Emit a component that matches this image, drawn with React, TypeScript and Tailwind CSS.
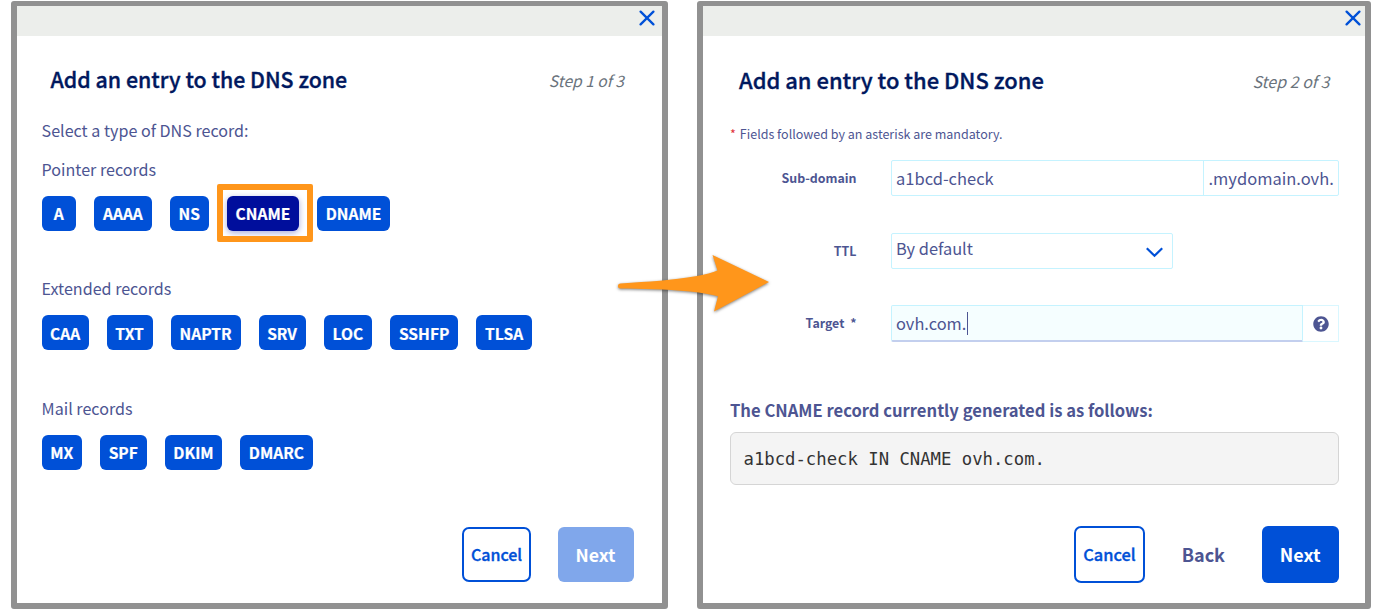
import React from "react";

type RecordType = { label: string; width: string; selected?: boolean };

const groups: { title: string; records: RecordType[] }[] = [
  {
    title: "Pointer records",
    records: [
      { label: "A", width: "w-[34.5px]" },
      { label: "AAAA", width: "w-[57.7px]" },
      { label: "NS", width: "w-[39px]" },
      { label: "CNAME", width: "w-[72.3px]", selected: true },
      { label: "DNAME", width: "w-[73px]" },
    ],
  },
  {
    title: "Extended records",
    records: [
      { label: "CAA", width: "w-[47px]" },
      { label: "TXT", width: "w-[46px]" },
      { label: "NAPTR", width: "w-[70px]" },
      { label: "SRV", width: "w-[47px]" },
      { label: "LOC", width: "w-[48.5px]" },
      { label: "SSHFP", width: "w-[68.2px]" },
      { label: "TLSA", width: "w-[55.7px]" },
    ],
  },
  {
    title: "Mail records",
    records: [
      { label: "MX", width: "w-[40.2px]" },
      { label: "SPF", width: "w-[47px]" },
      { label: "DKIM", width: "w-[57.4px]" },
      { label: "DMARC", width: "w-[72.5px]" },
    ],
  },
];

function CloseIcon({ className }: { className: string }) {
  return (
    <svg className={className} width="16" height="16" viewBox="0 0 16 16" fill="none" stroke="#0050d7" strokeWidth="2.3" strokeLinecap="round">
      <path d="M1.6 1.6 14.4 14.4M14.4 1.6 1.6 14.4" />
    </svg>
  );
}

function RecordButton({ label, width, selected }: RecordType) {
  const tone = selected ? "bg-[#000e9c] shadow-[0_2px_6px_rgba(0,14,156,0.35)]" : "bg-[#0050d7]";
  return (
    <div className="relative">
      <button className={`flex h-[35px] items-center justify-center rounded-[6px] text-[15.6px] leading-[22px] font-bold text-white [-webkit-text-stroke:0.2px_white] ${width} ${tone}`}>
        {label}
      </button>
      {selected && <span className="absolute -top-3 -left-[10px] h-[58px] w-24 rounded-[2px] border-[6px] border-[#ff961b]" />}
    </div>
  );
}

function SelectStep() {
  return (
    <section className="ml-[11px] mt-px h-[608px] w-[657px] shrink-0 rounded-[3px] border-[6px] border-t-[5px] border-[#919191] bg-white">
      <div className="flex h-[30px] justify-end bg-[#eceeeb]">
        <CloseIcon className="mt-[4px] mr-[7px]" />
      </div>
      <div className="pr-[25px] pl-[24.6px]">
        <header className="flex items-center justify-between pt-[28px] pl-[9px] pr-[13px]">
          <h1 className="text-[21.35px] leading-[30px] font-medium text-[#00185e] [-webkit-text-stroke:0.35px_#00185e]">Add an entry to the DNS zone</h1>
          <span className="pt-[2px] text-[15.6px] leading-[28px] text-[#6a737c] italic">Step 1 of 3</span>
        </header>
        <p className="pt-[24px] text-[16.1px] leading-[24px]">Select a type of DNS record:</p>
        <div className="flex flex-col gap-[45.7px] pt-[15px]">
          {groups.map((group) => (
            <div key={group.title}>
              <h2 className="text-[16.1px] leading-[24px]">{group.title}</h2>
              <div className="flex gap-[18px] pt-[14.8px]">
                {group.records.map((record) => (
                  <RecordButton key={record.label} {...record} />
                ))}
              </div>
            </div>
          ))}
        </div>
        <footer className="flex justify-end gap-[26.5px] pt-[57.2px] pr-[3.5px]">
          <button className="h-[55px] w-[69px] rounded-[7px] border-2 border-[#0050d7] text-[16px] font-medium text-[#0050d7] [-webkit-text-stroke:0.35px_#0050d7]">Cancel</button>
          <button className="h-[55px] w-[76px] rounded-[6px] bg-[#80a7eb] text-[17.7px] font-bold text-white">Next</button>
        </footer>
      </div>
    </section>
  );
}

function ConfigureStep() {
  return (
    <section className="ml-[29px] mt-px h-[608px] w-[674px] shrink-0 rounded-[3px] border-[6px] border-t-[5px] border-[#919191] bg-white">
      <div className="flex h-[30px] justify-end bg-[#eceeeb]">
        <CloseIcon className="mt-[4px] mr-[4.5px]" />
      </div>
      <div className="pr-[26px] pl-[27px]">
        <header className="flex items-center justify-between pt-[29px] pl-[9px] pr-[9.5px]">
          <h1 className="text-[21.95px] leading-[30px] font-medium text-[#00185e] [-webkit-text-stroke:0.35px_#00185e]">Add an entry to the DNS zone</h1>
          <span className="pt-[1px] text-[16px] leading-[28px] text-[#6a737c] italic">Step 2 of 3</span>
        </header>
        <p className="pt-[29px] text-[12.53px] leading-[20px]">
          <span className="mr-[4px] text-[#e0303a]">*</span>Fields followed by an asterisk are mandatory.
        </p>
        <div className="flex items-start pt-[16px]">
          <label className="w-[126.5px] text-right text-[12.4px] leading-[36px] font-bold">Sub-domain</label>
          <div className="ml-[34px] flex h-[36px] flex-1 rounded-[2px] border border-[#c5f3ff] text-[16.5px] leading-[34px]">
            <div className="w-[312.5px] border-r border-[#c5f3ff] pl-[4.5px]">a1bcd-check</div>
            <div className="pl-[4.5px]">.mydomain.ovh.</div>
          </div>
        </div>
        <div className="flex items-start pt-[37px]">
          <label className="w-[126.5px] text-right text-[12.4px] leading-[36px] font-bold">TTL</label>
          <div className="ml-[34px] flex h-[36px] w-[282.5px] justify-between rounded-[2px] border border-[#c5f3ff] pr-[9.5px] pl-[4.5px] text-[16.4px] leading-[28px]">
            By default
            <svg className="mt-[12.5px]" width="17" height="11" viewBox="0 0 17 11" fill="none" stroke="#0050d7" strokeWidth="2.2">
              <path d="M.8 1.2 8.5 8.8 16.2 1.2" />
            </svg>
          </div>
        </div>
        <div className="flex items-start pt-[36px]">
          <label className="w-[126.5px] text-right text-[12.4px] leading-[37px] font-bold">
            Target <span className="ml-[3px]">*</span>
          </label>
          <div className="ml-[34px] flex h-[37px] flex-1 text-[16.4px] leading-[35px]">
            <div className="flex w-[412.5px] items-start rounded-l-[2px] border border-[#c5f3ff] border-b-2 border-b-[#c3cfee] bg-[#f5feff] pl-[4.5px]">
              ovh.com.
              <span className="mt-[6px] ml-[0.5px] h-[23px] w-px bg-[#4d5592]" />
            </div>
            <div className="flex flex-1 items-center justify-center border border-l-0 border-[#d9f7ff]">
              <svg width="16" height="16" viewBox="0 0 512 512" fill="#4d5592">
                <path d="M504 256c0 136.997-111.043 248-248 248S8 392.997 8 256C8 119.083 119.043 8 256 8s248 111.083 248 248zM262.655 90c-54.497 0-89.255 22.957-116.549 63.758-3.536 5.286-2.353 12.415 2.715 16.258l34.699 26.31c5.205 3.947 12.621 3.008 16.665-2.122 17.864-22.658 30.113-35.797 57.303-35.797 20.429 0 45.698 13.148 45.698 32.958 0 14.976-12.363 22.667-32.534 33.976C247.128 238.528 216 254.941 216 296v4c0 6.627 5.373 12 12 12h56c6.627 0 12-5.373 12-12v-1.333c0-28.462 83.186-29.647 83.186-106.667 0-58.002-60.165-102-116.531-102zM256 338c-25.365 0-46 20.635-46 46 0 25.364 20.635 46 46 46s46-20.636 46-46c0-25.365-20.635-46-46-46z" />
              </svg>
            </div>
          </div>
        </div>
        <h2 className="pt-[56px] text-[16.6px] leading-[24px] font-bold">The CNAME record currently generated is as follows:</h2>
        <pre className="mt-[10px] h-[53px] rounded-[6px] border border-[#d5d5d5] bg-[#f4f4f4] pl-[12.5px] font-['DejaVu_Sans_Mono',monospace] text-[17.27px] leading-[52px] text-[#333]">
          {"a1bcd-check IN CNAME ovh.com."}
        </pre>
        <footer className="flex items-center justify-end pt-[41px]">
          <button className="h-[57px] w-[71.5px] rounded-[7px] border-2 border-[#0050d7] text-[16.4px] font-medium text-[#0050d7] [-webkit-text-stroke:0.35px_#0050d7]">Cancel</button>
          <button className="mx-[36.5px] text-[18px] font-bold">Back</button>
          <button className="h-[57px] w-[77.5px] rounded-[6px] bg-[#0050d7] text-[18px] font-bold text-white">Next</button>
        </footer>
      </div>
    </section>
  );
}

export default function App() {
  return (
    <main className="relative flex h-[610px] w-[1380px] overflow-hidden bg-white font-['Noto_Sans_CJK_JP',sans-serif] text-[#4d5592]">
      <SelectStep />
      <ConfigureStep />
      <svg className="absolute top-[250px] left-[610px] drop-shadow-[0_1.5px_1.5px_rgba(0,0,0,0.5)]" width="170" height="70" viewBox="610 250 170 70">
        <path
          d="M620.500 283.500C650 281.500 671 280.500 697 276Q710 273.500 717.500 270.500L712.500 255 769 282 714 311.500 718 296.300Q708 293.500 690 291.500C665 289 640 289 620.500 288.500A2.500 2.500 0 0 1 620.500 283.500Z"
          fill="#ff961b"
        />
      </svg>
    </main>
  );
}
